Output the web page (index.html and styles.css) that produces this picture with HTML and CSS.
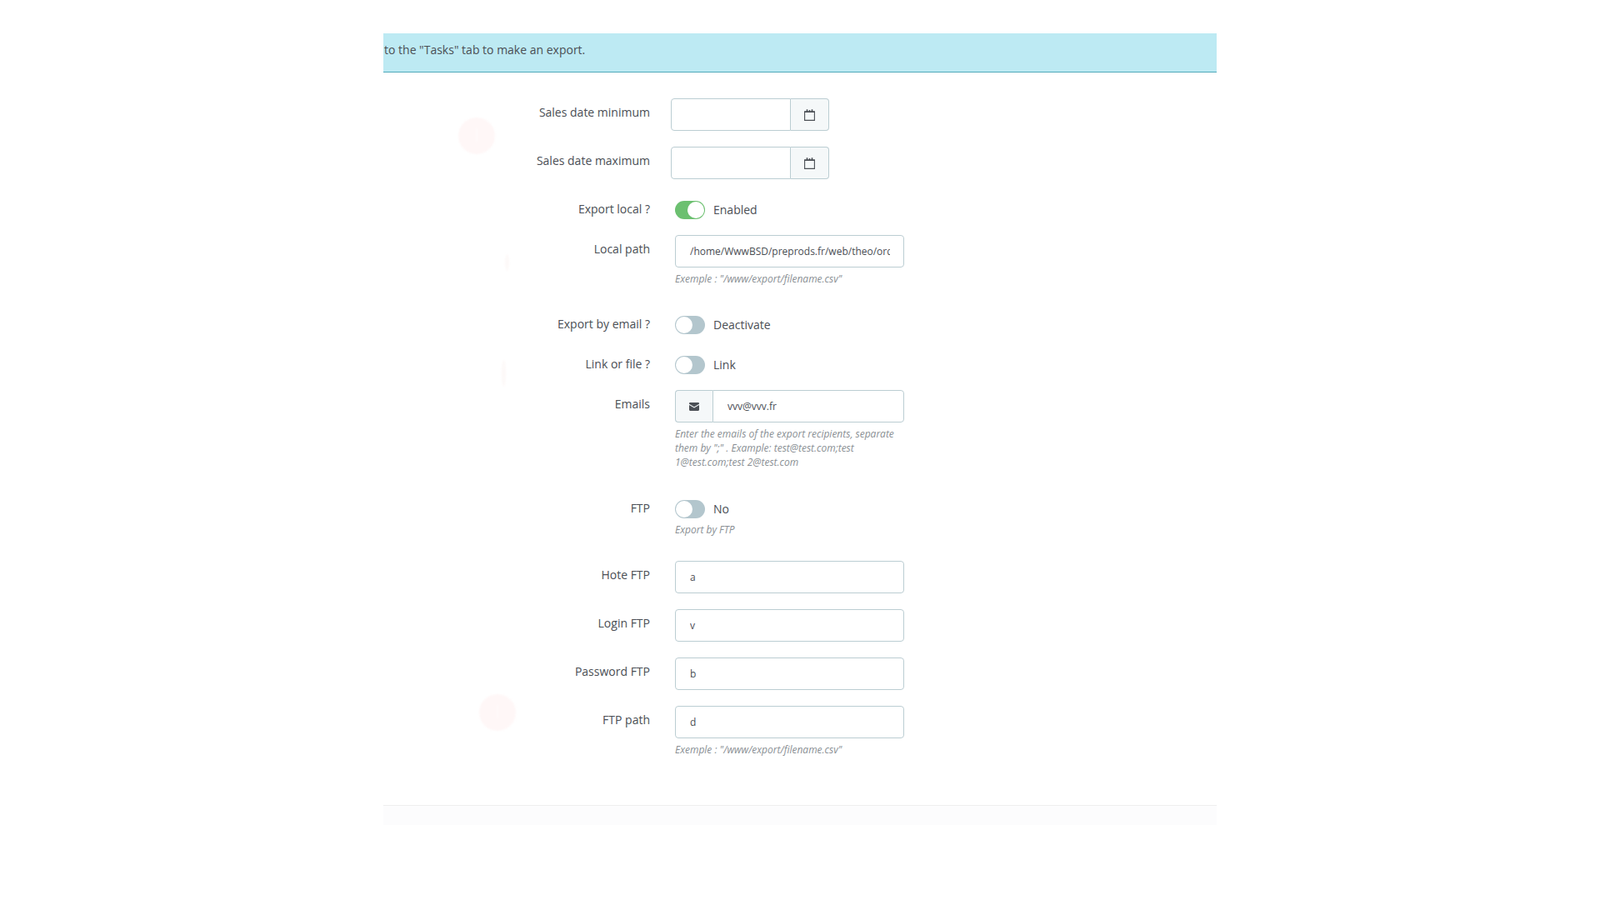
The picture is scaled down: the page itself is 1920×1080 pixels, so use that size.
FILE: index.html
```html
<!DOCTYPE html>
<html lang="en">
<head>
    <meta charset="UTF-8">
    <title>Export settings</title>
    <link rel="stylesheet" href="styles.css">
</head>
<body>
    <div class="container">
        <div class="alert-info">to the "Tasks" tab to make an export.</div>

        <form class="export-form">
            <div class="form-row">
                <label class="row-label">Sales date minimum</label>
                <div class="date-group">
                    <input class="form-input" type="text">
                    <span class="addon addon-right">
                        <svg class="icon-calendar" viewBox="0 0 13 14"><path d="M.6 3h11.8v10.4H.6z" fill="none" stroke="#4b4f55" stroke-width="1.1"/><path d="M0 2.6h13v1.4H0zM2.7 .3h1.6v3H2.7zM5.8 1h1.4v2H5.8zM8.7 .3h1.6v3H8.7z" fill="#4b4f55"/></svg>
                    </span>
                </div>
            </div>
            <div class="form-row">
                <label class="row-label">Sales date maximum</label>
                <div class="date-group">
                    <input class="form-input" type="text">
                    <span class="addon addon-right">
                        <svg class="icon-calendar" viewBox="0 0 13 14"><path d="M.6 3h11.8v10.4H.6z" fill="none" stroke="#4b4f55" stroke-width="1.1"/><path d="M0 2.6h13v1.4H0zM2.7 .3h1.6v3H2.7zM5.8 1h1.4v2H5.8zM8.7 .3h1.6v3H8.7z" fill="#4b4f55"/></svg>
                    </span>
                </div>
            </div>
            <div class="form-row">
                <label class="row-label">Export local ?</label>
                <div class="field">
                    <div class="switch-line"><span class="switch on"></span><span class="switch-text">Enabled</span></div>
                </div>
            </div>
            <div class="form-row has-hint">
                <label class="row-label">Local path</label>
                <div class="field">
                    <input class="form-input" type="text" value="/home/WwwBSD/preprods.fr/web/theo/orders/export.csv">
                    <p class="hint">Exemple : "/www/export/filename.csv"</p>
                </div>
            </div>
            <div class="form-row">
                <label class="row-label">Export by email ?</label>
                <div class="field">
                    <div class="switch-line"><span class="switch"></span><span class="switch-text">Deactivate</span></div>
                </div>
            </div>
            <div class="form-row">
                <label class="row-label">Link or file ?</label>
                <div class="field">
                    <div class="switch-line"><span class="switch"></span><span class="switch-text">Link</span></div>
                </div>
            </div>
            <div class="form-row has-hint mail-row">
                <label class="row-label">Emails</label>
                <div class="field">
                    <div class="mail-group">
                        <span class="addon addon-left">
                            <svg class="icon-mail" viewBox="0 0 12 10"><path d="M0 1.2C0 .5.5 0 1.2 0h9.6c.7 0 1.2.5 1.2 1.2v.5L6 5.2 0 1.7z M0 3l6 3.5L12 3v5.8c0 .7-.5 1.2-1.2 1.2H1.2C.5 10 0 9.5 0 8.8z" fill="#4b4f55"/></svg>
                        </span>
                        <input class="form-input" type="text" value="vvv@vvv.fr">
                    </div>
                    <p class="hint">Enter the emails of the export recipients, separate them by ";" . Example: test@test.com;test 1@test.com;test 2@test.com</p>
                </div>
            </div>
            <div class="form-row has-hint">
                <label class="row-label">FTP</label>
                <div class="field">
                    <div class="switch-line"><span class="switch"></span><span class="switch-text">No</span></div>
                    <p class="hint">Export by FTP</p>
                </div>
            </div>
            <div class="form-row">
                <label class="row-label">Hote FTP</label>
                <div class="field"><input class="form-input" type="text" value="a"></div>
            </div>
            <div class="form-row">
                <label class="row-label">Login FTP</label>
                <div class="field"><input class="form-input" type="text" value="v"></div>
            </div>
            <div class="form-row">
                <label class="row-label">Password FTP</label>
                <div class="field"><input class="form-input" type="text" value="b"></div>
            </div>
            <div class="form-row has-hint last">
                <label class="row-label">FTP path</label>
                <div class="field">
                    <input class="form-input" type="text" value="d">
                    <p class="hint">Exemple : "/www/export/filename.csv"</p>
                </div>
            </div>
        </form>

        <div class="form-footer"></div>
    </div>

    <!-- faint marks left over the page -->
    <span class="ghost ghost-top"></span>
    <span class="ghost ghost-bottom"></span>
    <span class="smear smear-top"></span>
    <span class="smear smear-bottom"></span>
</body>
</html>
```

FILE: styles.css
```css
* {
    box-sizing: border-box;
}
body {
    margin: 0;
    padding-top: 40px;
    background: #fff;
    color: #4a4e54;
    font-family: "Open Sans", "Liberation Sans", sans-serif;
    font-size: 14px;
    line-height: 21px;
}
.container {
    width: 1000px;
    margin: 0 auto;
}
.alert-info {
    height: 47px;
    padding: 9px 1px 0;
    background: #bdeaf3;
    border-bottom: 1px solid #4fa9ba;
}
.export-form {
    padding-top: 31px;
}
.form-row {
    display: flex;
    margin-bottom: 19px;
}
.form-row.has-hint {
    margin-bottom: 29px;
}
.form-row.mail-row {
    margin-bottom: 30px;
}
.form-row.last {
    margin-bottom: 58px;
}
.row-label {
    width: 320px;
    padding-top: 6px;
    text-align: right;
}
.field {
    width: 275px;
    margin-left: 30px;
}
.date-group {
    display: flex;
    width: 190px;
    height: 39px;
    margin-left: 25px;
}
.form-input {
    display: block;
    width: 100%;
    height: 39px;
    padding: 0 16px 0 17px;
    border: 1px solid #bbcdd2;
    border-radius: 4px;
    background: #fff;
    color: #4a4e54;
    font-family: inherit;
    font-size: 12px;
    outline: none;
}
.date-group .form-input {
    border-radius: 4px 0 0 4px;
}
.addon {
    display: flex;
    flex: none;
    align-items: center;
    justify-content: center;
    background: #f5f8f9;
    border: 1px solid #bbcdd2;
}
.addon-right {
    width: 46px;
    border-left: 0;
    border-radius: 0 4px 4px 0;
}
.addon-left {
    width: 45px;
    border-right: 0;
    border-radius: 4px 0 0 4px;
}
.icon-calendar {
    width: 13px;
    height: 14px;
}
.icon-mail {
    width: 12px;
    height: 10px;
}
.mail-group {
    display: flex;
    height: 39px;
}
.mail-group .form-input {
    border-radius: 0 4px 4px 0;
}
.switch-line {
    display: flex;
    gap: 10px;
    align-items: center;
    height: 22px;
    margin-top: 7px;
}
.switch-text {
    padding-bottom: 2px;
}
.switch {
    position: relative;
    width: 36px;
    height: 22px;
    border-radius: 11px;
    background: #b3c6cd;
}
.switch::after {
    content: "";
    position: absolute;
    top: 1px;
    left: 1px;
    width: 20px;
    height: 20px;
    border-radius: 50%;
    background: #fff;
}
.switch.on {
    background: #6cc070;
}
.switch.on::after {
    left: 15px;
}
.hint {
    margin: 5px 0 0;
    color: #8a8f94;
    font-size: 12px;
    font-style: italic;
    line-height: 17px;
}
.form-footer {
    height: 24px;
    background: #fcfcfd;
    border-top: 1px solid #eee;
}
.ghost {
    position: absolute;
    width: 44px;
    height: 44px;
    border-radius: 50%;
    background: #fff7f7;
    filter: blur(1px);
}
.ghost::after {
    content: "";
    position: absolute;
    top: 13px;
    left: 21px;
    width: 2px;
    height: 16px;
    background: #fffbfb;
}
.ghost-top {
    top: 141px;
    left: 550px;
}
.ghost-bottom {
    top: 833px;
    left: 575px;
}
.smear {
    position: absolute;
    width: 5px;
    border-radius: 50%;
    background: #fdf9f8;
    filter: blur(1px);
}
.smear-top {
    top: 305px;
    left: 606px;
    height: 20px;
}
.smear-bottom {
    top: 432px;
    left: 602px;
    height: 32px;
}
```
